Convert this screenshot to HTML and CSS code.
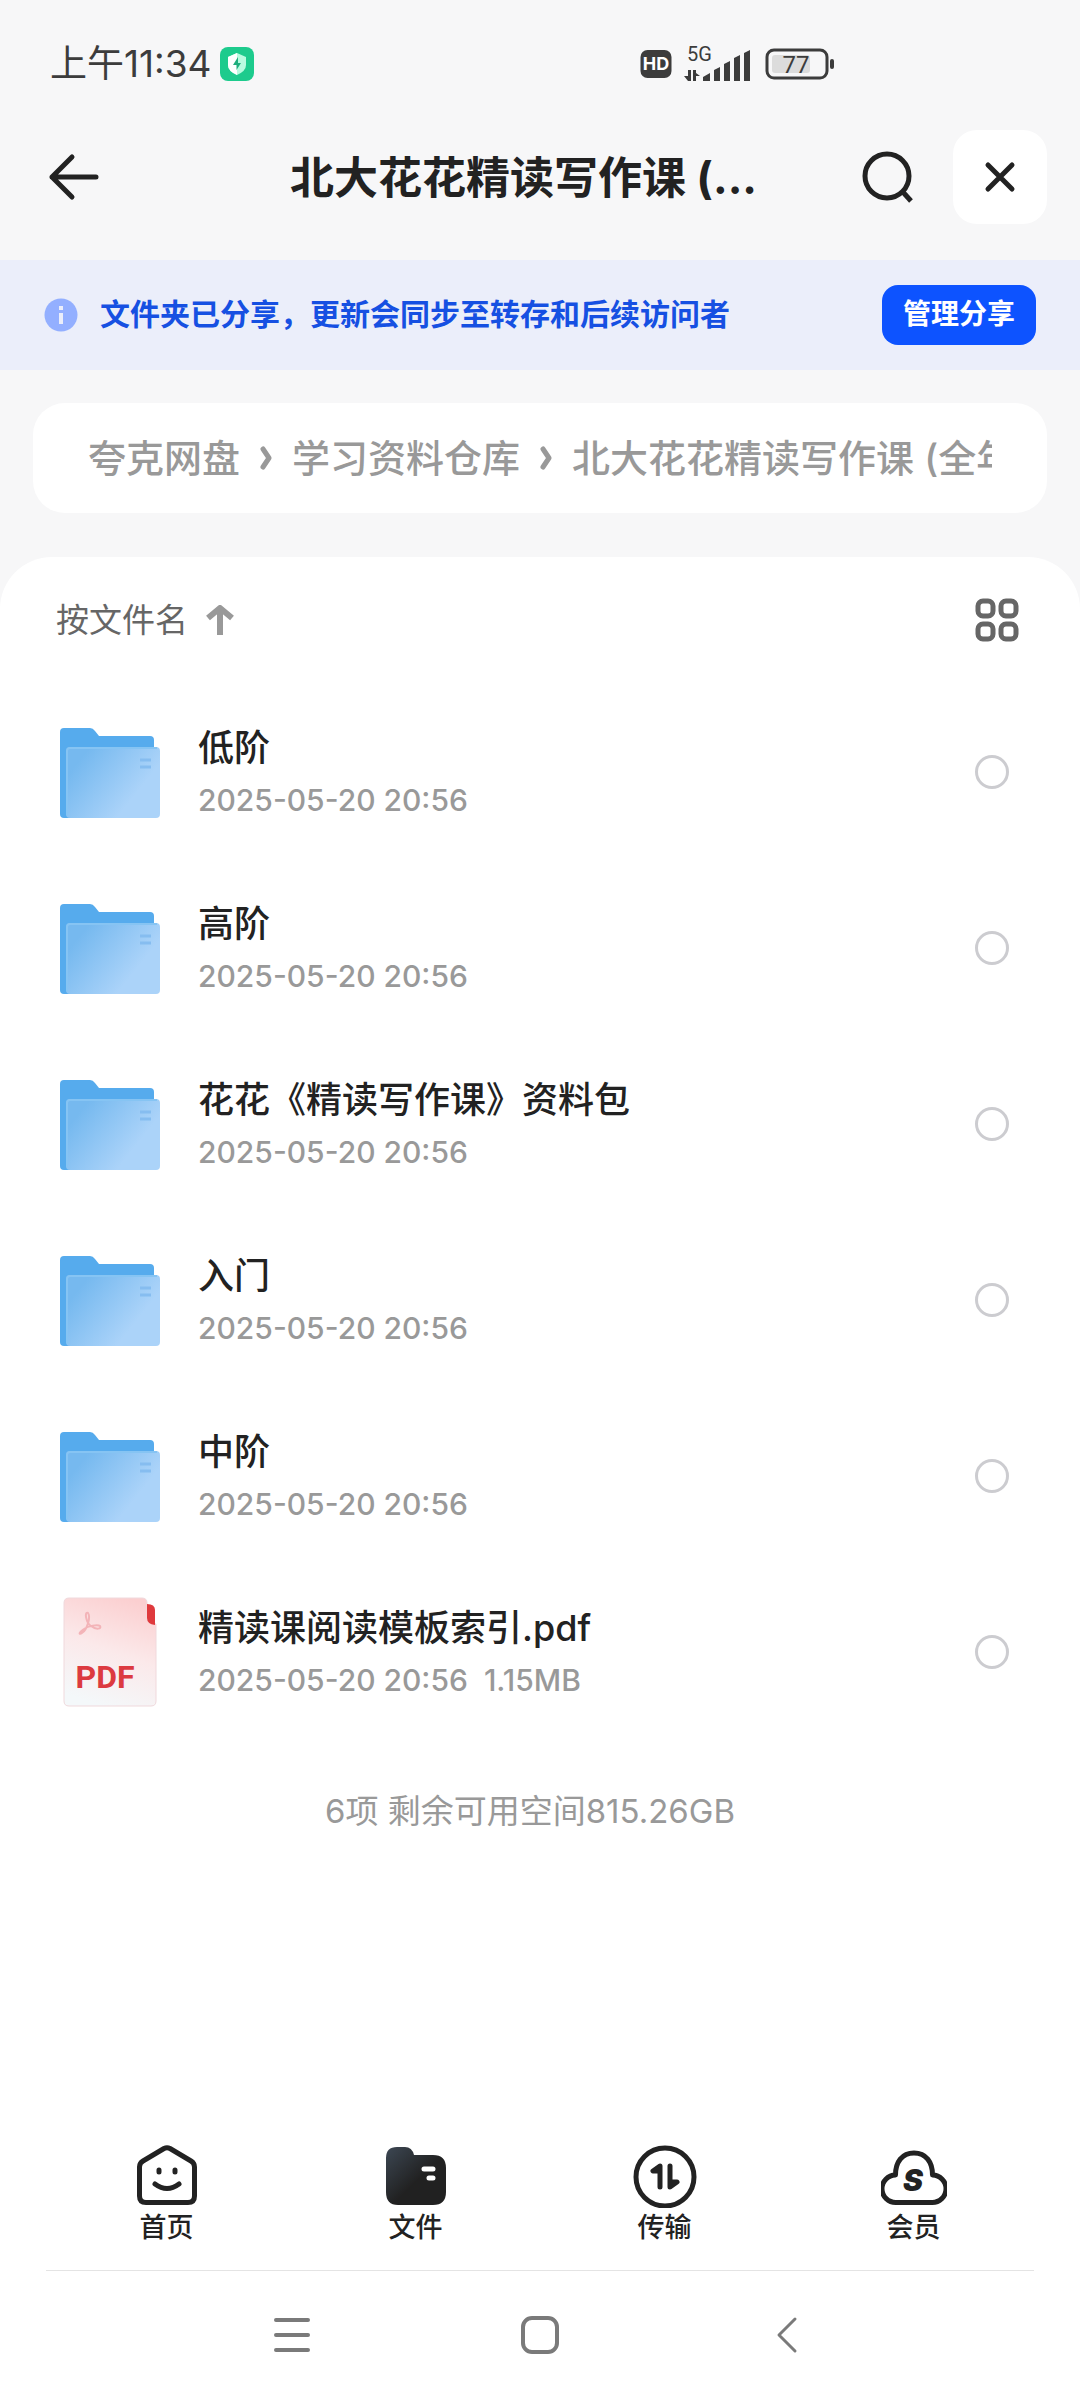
FILE: index.html
```html
<!DOCTYPE html>
<html lang="zh-CN">
<head>
  <meta charset="UTF-8" />
  <meta name="viewport" content="width=device-width, initial-scale=1" />
  <title>北大花花精读写作课</title>
  <link rel="stylesheet" href="styles.css">
</head>
<body>

  <!-- shared icons -->
  <svg class="defs" width="0" height="0" aria-hidden="true">
    <defs>
      <linearGradient id="folder-front" x1="0" y1="0.2" x2="1" y2="0.8">
        <stop offset="0.1" stop-color="#76b9ef" />
        <stop offset="0.75" stop-color="#abd3f9" />
      </linearGradient>
      <linearGradient id="pdf-page" x1="0.7" y1="0" x2="0.4" y2="1">
        <stop offset="0" stop-color="#fbcfd0" />
        <stop offset="0.5" stop-color="#fbe9ea" />
        <stop offset="1" stop-color="#f4f8fa" />
      </linearGradient>
      <linearGradient id="tab-folder" x1="0" y1="0.1" x2="0.5" y2="0.6">
        <stop offset="0" stop-color="#3a444f" />
        <stop offset="1" stop-color="#212121" />
      </linearGradient>
    </defs>
    <symbol id="folder" viewBox="0 0 100 92">
      <path d="M0 6Q0 2 4 2H30Q33 2 35 5L39 10H90Q94 10 94 14V50H10V92H4Q0 92 0 88Z" fill="#56abed" />
      <rect x="6" y="21" width="94" height="71" rx="4" fill="url(#folder-front)" />
      <path d="M7 89V25Q7 22 10 22H97" fill="none" stroke="#86c4f3" stroke-width="2" />
      <path d="M80 34h11M80 41h11" stroke="#86bdf0" stroke-width="3" />
    </symbol>
    <symbol id="chevron" viewBox="0 0 12 24">
      <path d="M3 3L9 12L3 21" fill="none" stroke="#999" stroke-width="5" stroke-linecap="round" stroke-linejoin="round" />
    </symbol>
  </svg>

  <div class="status">
    <div class="status-left">
      <span class="time">上午11:34</span>
      <svg width="34" height="34" viewBox="0 0 34 34">
        <rect width="34" height="34" rx="8" fill="#1dcb8d" />
        <path d="M17 6L26 10V18Q26 24 17 28Q8 24 8 18V10Z" fill="#b9fbe0" />
        <path d="M17 6L8 10V18Q8 24 17 28Z" fill="#fff" />
        <path d="M18 10L13 18H16.500V23L21 16H18Z" fill="#1fae7d" />
      </svg>
    </div>
    <div class="status-right">
      <svg width="32" height="30" viewBox="0 0 32 30">
        <rect x="0.500" y="1" width="31" height="28" rx="7" fill="#3c3c3c" />
        <text class="hd" x="16" y="21" text-anchor="middle">HD</text>
      </svg>
      <svg width="68" height="46" viewBox="0 -4 68 46">
        <text class="net" x="3" y="16">5G</text>
        <path d="M4 25H7V36H4L0 31H4ZM9 25H12V28L16 31H12V36H9Z" fill="#3c3c3c" />
        <path d="M19 36V32L26 28V36ZM30 36V25L36 22V36ZM40 36V19L46 16V36ZM50 36V13L56 10V36ZM60 36V8L66 5V36Z" fill="#3c3c3c" />
      </svg>
      <svg width="70" height="32" viewBox="0 0 70 32">
        <rect x="3" y="2" width="60" height="28" rx="7" fill="none" stroke="#3c3c3c" stroke-width="3" />
        <rect x="8" y="7" width="38" height="18" rx="3" fill="#dcdcdc" />
        <rect x="66" y="11" width="4" height="10" rx="2" fill="#3c3c3c" />
        <text class="battery" x="32" y="25" text-anchor="middle">77</text>
      </svg>
    </div>
  </div>

  <header class="header">
    <button class="icon-btn" aria-label="返回">
      <svg width="52" height="52" viewBox="0 0 52 52">
        <path d="M24 6L4 26L24 46M4 26H48" fill="none" stroke="#222" stroke-width="5" stroke-linecap="round" stroke-linejoin="round" />
      </svg>
    </button>
    <h1>北大花花精读写作课 (...</h1>
    <button class="icon-btn" aria-label="搜索">
      <svg width="54" height="54" viewBox="0 0 54 54">
        <circle cx="26" cy="26" r="22" fill="none" stroke="#222" stroke-width="5" />
        <path d="M41 41L50 51" stroke="#222" stroke-width="5" />
      </svg>
    </button>
    <button class="close-btn" aria-label="关闭">
      <svg width="32" height="32" viewBox="0 0 32 32">
        <path d="M4 4L28 28M28 4L4 28" stroke="#222" stroke-width="5" stroke-linecap="round" />
      </svg>
    </button>
  </header>

  <div class="banner">
    <svg width="34" height="34" viewBox="0 0 34 34">
      <circle cx="17" cy="17" r="16.500" fill="#93afff" />
      <path d="M17 15V26M17 8V12" stroke="#ebeefa" stroke-width="4" />
    </svg>
    <p>文件夹已分享，更新会同步至转存和后续访问者</p>
    <button class="share-btn">管理分享</button>
  </div>

  <nav class="crumbs">
    <div class="crumbs-inner">
      <a href="#">夸克网盘</a>
      <svg width="12" height="24"><use href="#chevron" /></svg>
      <a href="#">学习资料仓库</a>
      <svg width="12" height="24"><use href="#chevron" /></svg>
      <a href="#">北大花花精读写作课 (全年)</a>
    </div>
  </nav>

  <main class="panel">
    <div class="toolbar">
      <button class="sort-btn">
        按文件名
        <svg width="28" height="30" viewBox="0 0 28 30">
          <path d="M14 30V3M2 13L14 3L26 13" fill="none" stroke="#999" stroke-width="6" stroke-linejoin="round" />
        </svg>
      </button>
      <button class="icon-btn" aria-label="网格视图">
        <svg width="46" height="46" viewBox="0 0 46 46" fill="none" stroke="#666" stroke-width="5">
          <rect x="4" y="4" width="15" height="15" rx="5" />
          <rect x="27" y="4" width="15" height="15" rx="5" />
          <rect x="4" y="27" width="15" height="15" rx="5" />
          <rect x="27" y="27" width="15" height="15" rx="5" />
        </svg>
      </button>
    </div>

    <ul class="files">
      <li>
        <svg class="file-icon" viewBox="0 0 100 92"><use href="#folder" /></svg>
        <label for="f1"><span class="name">低阶</span><span class="meta">2025-05-20 20:56</span></label>
        <input type="checkbox" id="f1">
      </li>
      <li>
        <svg class="file-icon" viewBox="0 0 100 92"><use href="#folder" /></svg>
        <label for="f2"><span class="name">高阶</span><span class="meta">2025-05-20 20:56</span></label>
        <input type="checkbox" id="f2">
      </li>
      <li>
        <svg class="file-icon" viewBox="0 0 100 92"><use href="#folder" /></svg>
        <label for="f3"><span class="name">花花《精读写作课》资料包</span><span class="meta">2025-05-20 20:56</span></label>
        <input type="checkbox" id="f3">
      </li>
      <li>
        <svg class="file-icon" viewBox="0 0 100 92"><use href="#folder" /></svg>
        <label for="f4"><span class="name">入门</span><span class="meta">2025-05-20 20:56</span></label>
        <input type="checkbox" id="f4">
      </li>
      <li>
        <svg class="file-icon" viewBox="0 0 100 92"><use href="#folder" /></svg>
        <label for="f5"><span class="name">中阶</span><span class="meta">2025-05-20 20:56</span></label>
        <input type="checkbox" id="f5">
      </li>
      <li>
        <svg class="file-icon" viewBox="0 0 100 110">
          <path d="M9 1H82Q87 1 87 6V22Q87 26 96 27V104Q96 109 91 109H9Q4 109 4 104V6Q4 1 9 1Z" fill="url(#pdf-page)" stroke="#f0d9dc" stroke-width="1" />
          <path d="M87 7Q95 7 95 13V28Q87 27 87 21Z" fill="#df3a3d" />
          <path d="M28 16C24 14 26 26 31 29C36 33 42 32 40 29C38 27 28 29 24 32C18 36 19 38 22 36C27 33 31 20 28 16Z" fill="none" stroke="#f3b4b8" stroke-width="2" />
          <text class="pdf" x="45" y="91" text-anchor="middle">PDF</text>
        </svg>
        <label for="f6"><span class="name">精读课阅读模板索引.pdf</span><span class="meta">2025-05-20 20:56&nbsp; 1.15MB</span></label>
        <input type="checkbox" id="f6">
      </li>
    </ul>

    <p class="summary">6项 剩余可用空间815.26GB</p>
  </main>

  <nav class="tabs">
    <a href="#">
      <svg width="66" height="66" viewBox="0 0 66 66" fill="none" stroke="#222" stroke-width="5" stroke-linecap="round" stroke-linejoin="round">
        <path d="M30 6.500Q33 5 36 6.500L57 19Q60.500 21 60.500 25V54Q60.500 60.500 54 60.500H12Q5.500 60.500 5.500 54V25Q5.500 21 9 19Z" />
        <path d="M25 28V30M41 28V30M21 42Q33 51 45 42" />
      </svg>
      首页
    </a>
    <a href="#">
      <svg width="66" height="66" viewBox="0 0 66 66">
        <path d="M3 16Q3 5 14 5H22Q29 5 31 13H50Q63 13 63 26V50Q63 63 50 63H15Q3 63 3 50Z" fill="url(#tab-folder)" />
        <path d="M41 27H50M46 36H50" stroke="#fff" stroke-width="5" stroke-linecap="round" />
      </svg>
      文件
    </a>
    <a href="#">
      <svg width="66" height="66" viewBox="0 0 66 66">
        <circle cx="33" cy="35" r="29" fill="none" stroke="#222" stroke-width="5" />
        <path d="M28 45V24L21 29H28M38 24V45L45 40H38" fill="none" stroke="#222" stroke-width="5" stroke-linecap="round" stroke-linejoin="round" />
      </svg>
      传输
    </a>
    <a href="#">
      <svg width="66" height="66" viewBox="0 0 66 66">
        <path d="M15 60.500A13 13 0 0 1 14.500 33C14.500 20 21 11 33 11S51.500 20 51.500 33A13 13 0 0 1 51 60.500Z" fill="none" stroke="#222" stroke-width="5" stroke-linejoin="round" />
        <text class="vip" x="32" y="49" text-anchor="middle">S</text>
      </svg>
      会员
    </a>
  </nav>

  <div class="sysnav">
    <button aria-label="最近任务">
      <svg width="38" height="38" viewBox="0 0 38 38" stroke="#7a7a7a" stroke-width="4" stroke-linecap="round">
        <path d="M3 4H35M3 19H35M3 34H35" />
      </svg>
    </button>
    <button aria-label="主屏幕">
      <svg width="38" height="38" viewBox="0 0 38 38" fill="none" stroke="#7a7a7a" stroke-width="4">
        <rect x="2" y="2" width="34" height="34" rx="9" />
      </svg>
    </button>
    <button aria-label="返回上一级">
      <svg width="38" height="38" viewBox="0 0 38 38" fill="none" stroke="#7a7a7a" stroke-width="3" stroke-linecap="round" stroke-linejoin="round">
        <path d="M26 3L10 19L26 35" />
      </svg>
    </button>
  </div>

</body>
</html>
```

FILE: styles.css
```css
* { box-sizing: border-box; }
body {
  margin: 0;
  min-height: 100vh;
  display: flex;
  flex-direction: column;
  background: #f7f7f8;
  color: #222;
  font-family: Inter, "Noto Sans CJK SC", sans-serif;
}
svg { display: block; flex: none; }
.defs { position: absolute; }
a { color: inherit; text-decoration: none; }
button {
  border: none;
  background: none;
  padding: 0;
  font-family: inherit;
  color: inherit;
  cursor: pointer;
}

.status {
  display: grid;
  grid-template-columns: 640px 1fr;
  align-items: center;
  height: 128px;
  color: #3c3c3c;
}
.status-left {
  display: flex;
  align-items: center;
  gap: 8px;
  padding-left: 50px;
}
.time { font-size: 37px; line-height: 48px; }
.status-right { display: flex; align-items: center; gap: 12px; }
.hd { font: 700 18px Inter, sans-serif; fill: #fff; }
.net { font: 400 20px Roboto, sans-serif; fill: #3c3c3c; }
.battery { font: 400 24px Roboto, sans-serif; fill: #3c3c3c; }

.header {
  display: flex;
  align-items: center;
  height: 98px;
  padding: 0 33px 0 48px;
  margin-bottom: 34px;
}
.header h1 {
  flex: 1;
  margin: 0;
  padding: 2px 0 0 86px;
  text-align: center;
  font-size: 44px;
  line-height: 60px;
  font-weight: 700;
  white-space: nowrap;
}
.close-btn {
  display: flex;
  align-items: center;
  justify-content: center;
  width: 94px;
  height: 94px;
  margin-left: 38px;
  border-radius: 24px;
  background: #fff;
}

.banner {
  display: flex;
  align-items: center;
  height: 110px;
  padding: 0 44px;
  background: #ebeefa;
}
.banner p {
  flex: 1;
  margin: 0 0 2px 22px;
  font-size: 30px;
  line-height: 40px;
  font-weight: 700;
  color: #1650e2;
}
.share-btn {
  height: 60px;
  padding: 0 21px 2px;
  border-radius: 16px;
  background: #0d53ff;
  color: #fff;
  font-size: 28px;
  line-height: 40px;
  font-weight: 700;
}

.crumbs {
  margin: 33px 33px 44px;
  padding: 27px 55px;
  border-radius: 32px;
  background: #fff;
}
.crumbs-inner {
  display: flex;
  align-items: center;
  gap: 20px;
  overflow: hidden;
  color: #999;
  font-size: 38px;
  line-height: 56px;
  font-weight: 500;
  white-space: nowrap;
}

.panel {
  flex: 1;
  border-radius: 52px 52px 0 0;
  background: #fff;
}
.toolbar {
  display: flex;
  align-items: center;
  justify-content: space-between;
  height: 127px;
  padding: 0 60px 2px 56px;
}
.sort-btn {
  display: flex;
  align-items: center;
  gap: 18px;
  font-size: 33px;
  line-height: 44px;
  color: #666;
}

.files {
  list-style: none;
  margin: 0;
  padding: 0 71px 0 60px;
}
.files li {
  display: flex;
  align-items: center;
  height: 176px;
}
.file-icon { width: 100px; }
.files label {
  flex: 1;
  display: flex;
  flex-direction: column;
  gap: 8px;
  padding-left: 38px;
}
.name { font-size: 36px; line-height: 48px; font-weight: 500; }
.meta { font-size: 30px; line-height: 40px; font-weight: 500; color: #999; }
.files input {
  appearance: none;
  width: 34px;
  height: 34px;
  margin: 0;
  border: 3px solid #ccccd0;
  border-radius: 50%;
}
.files input:checked { background: #0d53ff; border-color: #0d53ff; }
.pdf { font: 700 32px Roboto, sans-serif; fill: #dc3a40; }

.summary {
  margin: 49px 0 0;
  padding-right: 20px;
  text-align: center;
  font-size: 33px;
  line-height: 44px;
  color: #999;
}

.tabs {
  display: flex;
  padding: 22px 42px 24px;
  background: #fff;
}
.tabs a {
  flex: 1;
  display: flex;
  flex-direction: column;
  align-items: center;
  gap: 2px;
  font-size: 27px;
  line-height: 36px;
  font-weight: 500;
}
.vip { font: italic 900 30px Inter, sans-serif; fill: #222; }

.sysnav {
  display: flex;
  justify-content: space-between;
  padding: 46px 273px;
  background: linear-gradient(#e4e4e4, #e4e4e4) center top / calc(100% - 92px) 1px no-repeat #fff;
}
```
